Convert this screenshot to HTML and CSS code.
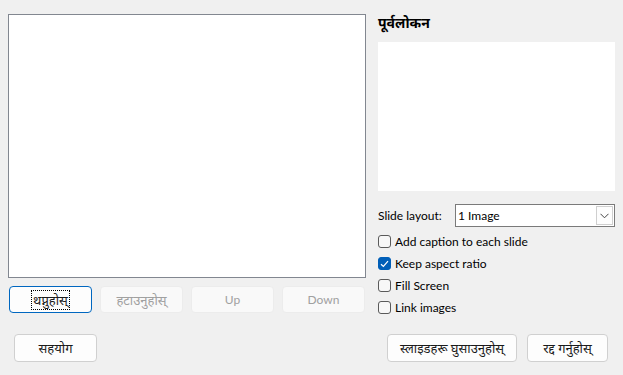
FILE: index.html
```html
<!DOCTYPE html>
<html>
<head>
<meta charset="utf-8">
<link rel="stylesheet" href="styles.css">
</head>
<body>
<div class="dialog">
  <div class="main">
    <div class="left">
      <div class="listbox"></div>
      <div class="btnrow">
        <button class="btn focused dev"><span class="focusrect">थप्नुहोस्</span></button>
        <button class="btn disabled dev">हटाउनुहोस्</button>
        <button class="btn disabled">Up</button>
        <button class="btn disabled">Down</button>
      </div>
    </div>
    <div class="right">
      <div class="title">पूर्वलोकन</div>
      <div class="preview"></div>
      <div class="layoutrow">
        <span class="label">Slide layout:</span>
        <div class="select">
          <span class="selval">1 Image</span>
          <span class="arrow"><svg width="9" height="6" viewBox="0 0 9 6"><path d="M0.5 0.8 L4.5 4.8 L8.5 0.8" fill="none" stroke="#444" stroke-width="1"/></svg></span>
        </div>
      </div>
      <div class="checks">
        <label class="check"><span class="box"></span>Add caption to each slide</label>
        <label class="check"><span class="box on"><svg width="9" height="8" viewBox="0 0 9 8"><path d="M1 4.2 L3.4 6.5 L8 1.2" fill="none" stroke="#fff" stroke-width="1.2"/></svg></span>Keep aspect ratio</label>
        <label class="check"><span class="box"></span>Fill Screen</label>
        <label class="check"><span class="box"></span>Link images</label>
      </div>
    </div>
  </div>
  <div class="bottom">
    <button class="btn help dev">सहयोग</button>
    <div class="actions">
      <button class="btn insert dev">स्लाइडहरू घुसाउनुहोस्</button>
      <button class="btn cancel dev">रद्द गर्नुहोस्</button>
    </div>
  </div>
</div>
</body>
</html>
```
FILE: styles.css
```css
html, body {
  margin: 0;
  padding: 0;
  background: #f0f0f0;
}
body {
  width: 623px;
  height: 375px;
  overflow: hidden;
  font-family: Lato, "Noto Sans", "Noto Sans Devanagari", sans-serif;
  font-size: 12px;
  color: #000;
}
.dialog {
  padding: 14px 8px 0 8px;
}
.main {
  display: flex;
  gap: 12px;
}
.left {
  width: 358px;
  display: flex;
  flex-direction: column;
}
.listbox {
  height: 262px;
  background: #fff;
  border: 1px solid #828790;
}
.btnrow {
  display: flex;
  gap: 8px;
  margin-top: 8px;
  padding-left: 1px;
}
.btn {
  box-sizing: border-box;
  height: 27px;
  width: 83px;
  font-family: inherit;
  font-size: 12px;
  color: #1a1a1a;
  background: #fdfdfd;
  border: 1px solid #d0d0d0;
  border-radius: 4px;
  padding: 0;
  display: flex;
  align-items: center;
  justify-content: center;
}
.btn.dev {
  font-size: 13px;
}
.btn.focused {
  border: 1px solid #0067c0;
}
.focusrect {
  outline: 1px dotted #000;
  padding: 0 1px;
  line-height: 18px;
}
.btn.disabled {
  background: #f9f9f9;
  border-color: #ececec;
  color: #a0a0a0;
}
.right {
  width: 237px;
  display: flex;
  flex-direction: column;
}
.title {
  height: 28px;
  font-weight: bold;
  font-size: 14px;
  line-height: 18px;
  padding-top: 0;
  box-sizing: border-box;
}
.preview {
  height: 149px;
  background: #fff;
}
.layoutrow {
  display: flex;
  align-items: center;
  margin-top: 13px;
  height: 23px;
}
.label {
  width: 77px;
}
.select {
  box-sizing: border-box;
  flex: 1;
  height: 23px;
  background: #fff;
  border: 1px solid #7a7a7a;
  display: flex;
  align-items: center;
  padding-left: 2px;
}
.selval {
  flex: 1;
}
.arrow {
  box-sizing: border-box;
  width: 17px;
  height: 19px;
  margin-right: 1px;
  border: 1px solid #cfcfcf;
  background: #fdfdfd;
  display: flex;
  align-items: center;
  justify-content: center;
}
.checks {
  display: flex;
  flex-direction: column;
  gap: 9px;
  margin-top: 8px;
}
.check {
  display: flex;
  align-items: center;
  height: 13px;
}
.box {
  box-sizing: border-box;
  width: 13px;
  height: 13px;
  border: 1px solid #5a5a5a;
  border-radius: 3px;
  background: #f7f7f7;
  margin-right: 4px;
  display: flex;
  align-items: center;
  justify-content: center;
}
.box.on {
  background: #005fb8;
  border-color: #005fb8;
}
.bottom {
  display: flex;
  justify-content: space-between;
  margin-top: 20px;
  padding: 0 7px 0 6px;
}
.btn.help, .btn.insert, .btn.cancel {
  height: 28px;
}
.actions {
  display: flex;
  gap: 10px;
}
.btn.insert {
  width: 130px;
}
.btn.cancel {
  width: 81px;
}
```
